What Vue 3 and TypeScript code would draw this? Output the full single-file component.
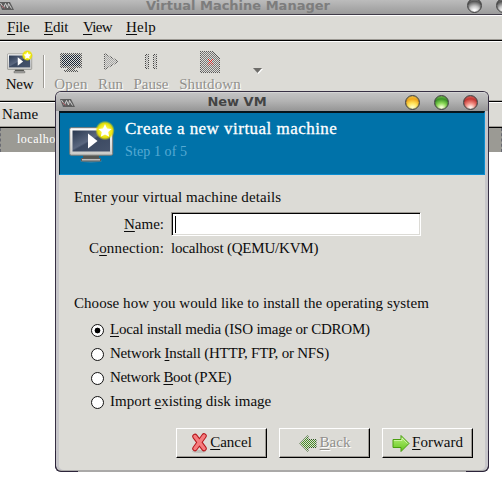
<script setup lang="ts">
import { ref } from 'vue'

interface Mnemonic {
  before?: string
  key: string
  after: string
  id: string
}

const menus: Mnemonic[] = [
  { id: 'file', key: 'F', after: 'ile' },
  { id: 'edit', key: 'E', after: 'dit' },
  { id: 'view', key: 'V', after: 'iew' },
  { id: 'help', key: 'H', after: 'elp' },
]

const sources: Mnemonic[] = [
  { id: 'local', key: 'L', after: 'ocal install media (ISO image or CDROM)' },
  { id: 'network', before: 'Network ', key: 'I', after: 'nstall (HTTP, FTP, or NFS)' },
  { id: 'pxe', before: 'Network ', key: 'B', after: 'oot (PXE)' },
  { id: 'import', before: 'Import ', key: 'e', after: 'xisting disk image' },
]

const lights = ['yellow', 'green', 'red']
const selected = ref('local')
</script>

<template>
  <div class="desktop">
    <svg class="defs" width="0" height="0">
      <defs>
        <pattern id="dots" width="2" height="2" patternUnits="userSpaceOnUse">
          <path d="M0 0h1v1h-1zM1 1h1v1h-1z" fill="#dcdbd6" shape-rendering="crispEdges" />
        </pattern>
        <linearGradient id="screen" x1="0" y1="0" x2="1" y2="1">
          <stop offset="0" stop-color="#29384f" />
          <stop offset=".45" stop-color="#5b6880" />
          <stop offset=".5" stop-color="#3c4a62" />
          <stop offset="1" stop-color="#46536b" />
        </linearGradient>
        <linearGradient id="bezel" x1="0" y1="0" x2="0" y2="1">
          <stop offset="0" stop-color="#fff" />
          <stop offset="1" stop-color="#c9c9c6" />
        </linearGradient>
        <radialGradient id="glow">
          <stop offset="0" stop-color="#fff" />
          <stop offset=".4" stop-color="#fbf43c" />
          <stop offset=".75" stop-color="#ece400" stop-opacity=".95" />
          <stop offset="1" stop-color="#e8e000" stop-opacity="0" />
        </radialGradient>
        <linearGradient id="lime" x1="0" y1="0" x2="0" y2="1">
          <stop offset="0" stop-color="#b9f27c" />
          <stop offset="1" stop-color="#63c51c" />
        </linearGradient>
        <symbol id="monitor" viewBox="0 0 46 42">
          <ellipse cx="22" cy="40" rx="11" ry="1.5" fill="#b5b5b1" opacity=".4" />
          <path d="M14 34h16v3h-16z" fill="#555753" />
          <path d="M12.5 37.5h19v2.500h-19z" fill="#bbb" stroke="#5b5b58" />
          <rect x=".7" y="6.700" width="43" height="27.500" rx="1.500" fill="url(#bezel)" stroke="#777773" />
          <rect x="3.500" y="9.500" width="37.500" height="21" fill="url(#screen)" />
          <path d="M19 12.500l9.500 7.500l-9.500 7.500z" fill="#fff" />
          <circle cx="36" cy="9.500" r="9.800" fill="url(#glow)" />
          <path d="M36 3l2 4.400l4.700.5l-3.500 3.200l1 4.700l-4.200-2.400l-4.200 2.400l1-4.700l-3.500-3.200l4.700-.5z" fill="#fff" />
        </symbol>
        <symbol id="vmm" viewBox="0 0 15 9">
          <path d="M0 1h11l4 8H3z" fill="#5d5d5d" />
          <path d="M1.500 2l3 5 2-4.500 2 4.500 1-4.500 3 5" fill="none" stroke="#d2d2d2" />
          <path d="M2.500 4.500l3 3" stroke="#a5525a" />
        </symbol>
      </defs>
    </svg>

    <header class="titlebar back-title">
      <svg class="app-mark"><use href="#vmm" /></svg>
      <span class="title-text">Virtual Machine Manager</span>
      <i class="light gray first" /><i class="light gray second" />
    </header>
    <nav class="menubar">
      <span v-for="m in menus" :key="m.id" :class="['menu', m.id]"><u>{{ m.key }}</u>{{ m.after }}</span>
    </nav>
    <div class="toolbar">
      <div class="tool new">
        <svg width="26" height="25" viewBox="0 0 26 25"><use href="#monitor" x="0" y="0" width="26" height="24" /></svg>
        <span>New</span>
      </div>
      <i class="separator" />
      <div class="tool off open">
        <svg width="24" height="25" viewBox="0 0 24 25">
          <rect x="1" y="3" width="22" height="15" rx="1" fill="#555" />
          <rect x="3" y="5" width="18" height="11" fill="#172334" />
          <path d="M8 18h8v2h3v2H5v-2h3z" fill="#555" />
          <path d="M0 0h24v25H0z" fill="url(#dots)" />
        </svg>
        <span>Open</span>
      </div>
      <div class="tool off run">
        <svg width="24" height="25" viewBox="0 0 24 25">
          <path d="M5.500 3.500v16l14-8z" fill="#aaa" stroke="#555" />
          <path d="M0 0h24v25H0z" fill="url(#dots)" />
        </svg>
        <span>Run</span>
      </div>
      <div class="tool off pause">
        <svg width="24" height="25" viewBox="0 0 24 25">
          <path d="M6.500 4.500h3v14h-3zM14.500 4.500h3v14h-3z" fill="#aaa" stroke="#444" />
          <path d="M0 0h24v25H0z" fill="url(#dots)" />
        </svg>
        <span>Pause</span>
      </div>
      <div class="tool off shutdown">
        <svg width="24" height="25" viewBox="0 0 24 25">
          <path d="M2 1h13l7 7v15H2z" fill="#555" />
          <path d="M3 2h11l7 7v13H3z" fill="#777" />
          <path d="M10 9l5 6M15 9l-5 6" stroke="#d22" stroke-width="1.500" />
          <path d="M0 0h24v25H0z" fill="url(#dots)" />
        </svg>
        <span>Shutdown</span>
      </div>
      <svg class="drop" width="10" height="6" viewBox="0 0 10 6">
        <path d="M1 1h9l-4.500 5z" fill="#fff" /><path d="M0 0h9l-4.500 5z" fill="#6d6c69" />
      </svg>
    </div>
    <div class="column-head">Name</div>
    <div class="list-row">localhost</div>

    <section class="dialog">
      <header class="titlebar dialog-title">
        <svg class="app-mark"><use href="#vmm" /></svg>
        <span class="title-text">New VM</span>
        <span class="lights"><i v-for="c in lights" :key="c" :class="['light', c]" /></span>
      </header>
      <div class="banner">
        <svg width="46" height="42"><use href="#monitor" width="46" height="42" /></svg>
        <div>
          <h1>Create a new virtual machine</h1>
          <p>Step 1 of 5</p>
        </div>
      </div>
      <div class="content">
        <p class="line intro">Enter your virtual machine details</p>
        <div class="field">
          <label class="name-label"><u>N</u>ame:</label>
          <div class="entry"><i class="caret" /></div>
        </div>
        <div class="field conn">
          <span class="conn-label">C<u>o</u>nnection:</span>
          <span class="conn-value">localhost (QEMU/KVM)</span>
        </div>
        <p class="line choose">Choose how you would like to install the operating system</p>
        <div v-for="s in sources" :key="s.id" :class="['option', s.id]" @click="selected = s.id">
          <i :class="['radio', { on: selected === s.id }]" />
          <span>{{ s.before }}<u>{{ s.key }}</u>{{ s.after }}</span>
        </div>
        <footer class="actions">
          <div class="button cancel">
            <svg width="17" height="21" viewBox="0 0 17 21">
              <ellipse cx="8" cy="18.500" rx="7" ry="1.500" fill="#aaa9a5" opacity=".6" />
              <path d="M4 3.500L13 15.500M13 3L4 15.500" stroke="#b5171c" stroke-width="5.500" stroke-linecap="round" />
              <path d="M4 3.500L13 15.500M13 3L4 15.500" stroke="#f57c7e" stroke-width="3.500" stroke-linecap="round" />
            </svg>
            <span><u>C</u>ancel</span>
          </div>
          <div class="button off back">
            <svg width="18" height="19" viewBox="0 0 18 19">
              <path d="M17 5.500H9V1.500L1 9.500l8 8V13.500h8z" fill="#458f22" stroke="#2f5a20" />
              <path d="M0 0h18v19H0z" fill="url(#dots)" />
            </svg>
            <span><u>B</u>ack</span>
          </div>
          <div class="button forward">
            <svg width="18" height="19" viewBox="0 0 18 19">
              <path d="M1 5.500h8V1.500l8 8-8 8V13.500H1z" fill="url(#lime)" stroke="#4a9e10" />
              <path d="M2 6.500h8V4l5.500 5.500" fill="none" stroke="#d8f9b4" stroke-width=".8" />
            </svg>
            <span><u>F</u>orward</span>
          </div>
        </footer>
      </div>
    </section>
  </div>
</template>

<style>
body { background: #fff; overflow: hidden; }
</style>

<style scoped>
* { box-sizing: border-box; }
.desktop {
  position: relative;
  width: 502px;
  height: 486px;
  overflow: hidden;
  background: #fff;
  color: #0c0c0c;
  font: 15px/18px "Liberation Serif", serif;
  white-space: nowrap;
}
.defs { position: absolute; }
h1, p { margin: 0; font-weight: normal; }
u { text-decoration: underline; text-decoration-thickness: 1px; text-underline-offset: 2px; text-decoration-skip-ink: none; }
svg { display: block; flex: none; }

.titlebar {
  display: flex;
  position: relative;
  align-items: center;
  justify-content: center;
  background: linear-gradient(#c3c3c3, #b3b3b3 45%, #959595);
  font: bold 13px/16px "DejaVu Sans", sans-serif;
}
.back-title {
  align-items: flex-start;
  height: 15px;
  border-bottom: 1px solid #403b48;
  color: #7d7d7d;
  background: linear-gradient(#bcbcbc, #9b9b9b);
}
.back-title .title-text { margin-left: -26px; line-height: 12px; }
.app-mark { position: absolute; left: -1px; top: 1px; width: 15px; height: 9px; }
.light {
  display: block;
  width: 15px;
  height: 15px;
  border: 1px solid #444;
  border-radius: 50%;
  box-shadow: inset 0 0 1px #333;
}
.yellow { background: radial-gradient(circle at 50% 95%, #fffdbd 10%, #ffe359 38%, #efa51b 68%, #ffe061); }
.green { background: radial-gradient(circle at 50% 95%, #f3ffd2 10%, #8cd957 38%, #399126 68%, #9be06c); }
.red { background: radial-gradient(circle at 50% 95%, #fff0e8 10%, #f28b81 38%, #c43632 68%, #ef837a); }
.gray { position: absolute; top: -2px; background: radial-gradient(circle at 50% 95%, #fff 10%, #c5c5c5 38%, #555 72%, #aaa); }
.first { left: 467px; }
.second { left: 496px; }

.menubar {
  display: flex;
  align-items: center;
  height: 26px;
  padding: 0 0 2px 7px;
  background: #dcdbd6;
  border-top: 1px solid #fff;
  border-bottom: 1px solid #000;
  box-shadow: inset 0 -1px #9d9a94;
}
.file { width: 37px; letter-spacing: -.2px; }
.edit { width: 39px; letter-spacing: -.2px; }
.view { width: 43px; letter-spacing: -.7px; }
.help { letter-spacing: .2px; }

.toolbar {
  display: flex;
  height: 60px;
  background: #dcdbd6;
  border-top: 1px solid #fff;
  padding: 8px 0 0;
}
.tool { display: flex; flex-direction: column; align-items: center; }
.tool span { height: 18px; }
.tool.off { color: #91908c; text-shadow: 1px 1px #fff; }
.new { width: 39px; }
.new span { letter-spacing: -.3px; }
.separator { width: 2px; height: 33px; margin: 5px 0 0 4px; border-left: 1px solid #9d9a94; border-right: 1px solid #fff; }
.open { width: 52px; }
.open span { letter-spacing: .3px; }
.run { width: 27px; }
.pause { width: 54px; }
.shutdown { width: 64px; }
.shutdown span { letter-spacing: .1px; }
.drop { margin: 18px 0 0 11px; }

.column-head {
  height: 27px;
  padding: 3px 2px 0;
  background: #dcdbd6;
  border-top: 1px solid #000;
  border-bottom: 1px solid #000;
  box-shadow: inset 0 1px #fff, inset 0 -1px #9d9a94, 0 -1px #aaa8a2;
  letter-spacing: .1px;
}
.list-row {
  height: 24px;
  padding-left: 16px;
  background: #9b9a94;
  border: dashed #696a72;
  border-width: 0 1px;
  color: #fff;
  font-size: 12px;
  line-height: 23px;
  letter-spacing: .5px;
}

.dialog {
  position: absolute;
  left: 55px;
  top: 91px;
  width: 434px;
  height: 381px;
  background: #dcdbd6;
  border: 1px solid #373044;
  border-bottom: 2px solid #aaa9a8;
  border-radius: 6px;
  box-shadow: inset 3px 0 #c7c6ca, inset -3px 0 #c7c6ca;
}
.dialog::before, .dialog::after {
  content: "";
  position: absolute;
  bottom: -2px;
  width: 22px;
  height: 20px;
  border-bottom: 1px solid #2c243a;
}
.dialog::before { left: -1px; border-left: 1px solid #2c243a; border-radius: 0 0 0 6px; }
.dialog::after { right: -1px; border-right: 1px solid #2c243a; border-radius: 0 0 6px 0; }
.dialog-title {
  height: 19px;
  border-radius: 5px 5px 0 0;
  border-top: 1px solid #d4d4d4;
  color: #434343;
}
.dialog-title .title-text { margin-left: -70px; }
.dialog-title .app-mark { left: 4px; top: 5px; }
.lights { position: absolute; right: 10px; top: 2px; display: flex; gap: 14px; }

.banner {
  display: flex;
  height: 64px;
  margin: 0 3px;
  padding: 8px 0 0 9px;
  gap: 10px;
  background: #0072a9;
  border: 1px solid #0c8dd0;
  border-top: 2px solid #06151c;
  border-left-color: #031d2a;
  color: #fff;
}
h1 { font-size: 17px; line-height: 20px; letter-spacing: .47px; -webkit-text-stroke: .3px #fff; margin-top: -2px; }
.banner p { margin-top: 4px; color: #56aad3; font-size: 14px; letter-spacing: .1px; }

.content { padding: 13px 15px 0 18px; }
.intro { height: 24px; letter-spacing: .09px; }
.choose { margin-top: 34px; height: 24px; letter-spacing: .05px; }
.field { display: flex; height: 24px; align-items: center; }
.name-label { width: 97px; padding-right: 7px; text-align: right; margin-top: -1px; }
.entry {
  width: 250px;
  height: 24px;
  padding: 3px;
  background: #fff;
  border: 1px solid #9d9a94;
  border-right-color: #fff;
  border-bottom-color: #fff;
  box-shadow: inset 1px 1px #000, inset -1px -1px #dcdbd6;
}
.caret { display: block; width: 1px; height: 17px; background: #000; }
.conn span { margin-top: -1px; }
.conn-label { width: 97px; padding-right: 7px; text-align: right; letter-spacing: .15px; }
.conn-value { letter-spacing: -.2px; }
.option { display: flex; height: 24px; align-items: center; padding-left: 17px; gap: 6px; }
.option span { margin-top: -2px; }
.local, .network { letter-spacing: -.21px; }
.pxe { letter-spacing: -.35px; }
.radio { width: 13px; height: 13px; border: 1px solid #111; border-radius: 50%; background: #fff; }
.radio.on { background: radial-gradient(circle, #000 0 2.600px, #fff 3.200px); }
.actions { display: flex; justify-content: flex-end; gap: 12px; margin-top: 14px; }
.button {
  display: flex;
  align-items: center;
  justify-content: center;
  gap: 2px;
  width: 91px;
  height: 30px;
  border: 1px solid;
  border-color: #fff #000 #000 #fff;
  box-shadow: inset -1px -1px #9d9a94;
}
.button span { margin-top: -2px; }
.button.off { color: #91908c; text-shadow: 1px 1px #fff; }
.button.off svg { margin-right: 1px; }
</style>
